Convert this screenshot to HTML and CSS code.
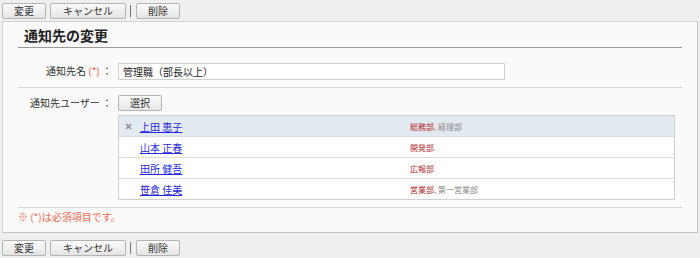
FILE: index.html
```html
<!DOCTYPE html>
<html lang="ja">
<head>
<meta charset="utf-8">
<link rel="stylesheet" href="styles.css">
</head>
<body>
<div class="toolbar">
  <button class="btn w-short">変更</button>
  <button class="btn w-long">キャンセル</button>
  <span class="sep"></span>
  <button class="btn w-short">削除</button>
</div>
<div class="panel">
  <div class="section">
    <h1 class="title">通知先の変更</h1>
    <div class="row row-name">
      <div class="label">通知先名 <span class="req">(*)</span> ：</div>
      <div class="field"><div class="input">管理職（部長以上）</div></div>
    </div>
    <div class="row row-users">
      <div class="label">通知先ユーザー ：</div>
      <div class="field">
        <button class="btn w-short">選択</button>
        <div class="users">
          <div class="urow selected">
            <span class="rm"><svg width="7" height="7" viewBox="0 0 7 7"><path d="M1 1L6 6M6 1L1 6" stroke="#8a8a8a" stroke-width="1.4"/></svg></span>
            <a class="name">上田 恵子</a>
            <span class="dept"><span class="main">総務部</span>, 経理部</span>
          </div>
          <div class="urow">
            <span class="rm"></span>
            <a class="name">山本 正春</a>
            <span class="dept"><span class="main">開発部</span></span>
          </div>
          <div class="urow">
            <span class="rm"></span>
            <a class="name">田所 健吾</a>
            <span class="dept"><span class="main">広報部</span></span>
          </div>
          <div class="urow">
            <span class="rm"></span>
            <a class="name">笹倉 佳美</a>
            <span class="dept"><span class="main">営業部</span>, 第一営業部</span>
          </div>
        </div>
      </div>
    </div>
    <p class="note">※ (*)は必須項目です。</p>
  </div>
</div>
<div class="toolbar">
  <button class="btn w-short">変更</button>
  <button class="btn w-long">キャンセル</button>
  <span class="sep"></span>
  <button class="btn w-short">削除</button>
</div>
</body>
</html>
```
FILE: styles.css
```css
* { box-sizing: border-box; }
html, body {
  margin: 0;
  padding: 0;
  background: #efefef;
  font-family: "Noto Sans CJK JP", "Noto Sans", sans-serif;
  font-size: 10px;
  color: #333;
}
.toolbar {
  display: flex;
  align-items: center;
  gap: 4px;
  height: 21px;
  padding: 0 2px;
}
.toolbar:last-child {
  height: 26px;
  padding-top: 3px;
}
.btn {
  height: 16px;
  padding: 0;
  border: 1px solid #b4b4b4;
  border-radius: 2px;
  background: linear-gradient(#fbfbfb, #e4e4e4);
  font-family: inherit;
  font-size: 10px;
  line-height: 14px;
  color: #333;
}
.w-short { width: 44px; }
.w-long { width: 76px; }
.sep {
  width: 1px;
  height: 12px;
  background: #777;
  margin: 0 1px 0 0;
}
.panel {
  margin: 0 2px;
  width: 696px;
  border: 1px solid #d0d0d0;
  border-right-color: #c4c4c4;
  border-bottom-color: #c4c4c4;
  background: #fafafa;
}
.section {
  padding: 0 15px;
}
.title {
  margin: 0;
  height: 26px;
  padding: 5px 0 0 6px;
  font-size: 14px;
  line-height: 16px;
  font-weight: bold;
  color: #222;
  border-bottom: 1px solid #9a9a9a;
}
.row {
  display: grid;
  grid-template-columns: 100px 1fr;
  border-bottom: 1px solid #d8d8d8;
}
.row-name {
  padding: 15px 0 7px;
}
.row-users {
  padding: 7px 0 7px;
}
.label {
  text-align: right;
  padding-right: 6px;
  line-height: 16px;
  color: #333;
}
.req { color: #e2553a; }
.input {
  width: 387px;
  height: 17px;
  border: 1px solid #cfcfcf;
  background: #fff;
  padding: 0 4px;
  line-height: 15px;
  color: #222;
}
.users {
  margin-top: 4px;
  width: 557px;
  border: 1px solid #cfcfcf;
  background: #fff;
}
.urow {
  display: flex;
  align-items: center;
  height: 21px;
  border-top: 1px solid #dcdcdc;
}
.urow:first-child { border-top: 0; height: 20px; }
.urow.selected { background: #e3e9f0; }
.rm {
  width: 21px;
  padding-left: 6px;
  display: flex;
  align-items: center;
}
.name {
  width: 270px;
  color: #2828d8;
  text-decoration: underline;
}
.dept {
  font-size: 8px;
  color: #8a8a8a;
}
.dept .main { color: #b2282b; }
.note {
  margin: 0;
  height: 24px;
  padding: 3px 0 0 0;
  line-height: 12px;
  color: #ea6a52;
}
```
